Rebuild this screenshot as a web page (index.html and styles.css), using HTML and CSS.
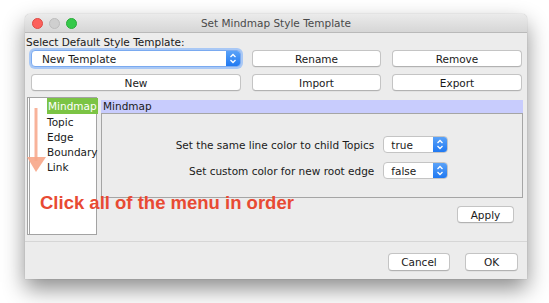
FILE: index.html
```html
<!DOCTYPE html>
<html>
<head>
<meta charset="utf-8">
<link rel="stylesheet" href="styles.css">
</head>
<body>
<div class="window">
  <div class="titlebar">
    <div class="lights">
      <span class="light red"></span>
      <span class="light gray"></span>
      <span class="light green"></span>
    </div>
    <div class="title">Set Mindmap Style Template</div>
  </div>
  <div class="content">
    <div class="label-top">Select Default Style Template:</div>
    <div class="btn-grid">
      <div class="combo combo-main focus">
        <span class="combo-text">New Template</span>
        <span class="combo-arrow"><svg width="8" height="11" viewBox="0 0 8 11"><path d="M1.5 4 L4 1.5 L6.5 4 M1.5 7 L4 9.5 L6.5 7" fill="none" stroke="#fff" stroke-width="1.3"/></svg></span>
      </div>
      <div class="btn">Rename</div>
      <div class="btn">Remove</div>
      <div class="btn">New</div>
      <div class="btn">Import</div>
      <div class="btn">Export</div>
    </div>
    <div class="main">
      <div class="list">
        <div class="item first"><span class="sel">Mindmap</span></div>
        <div class="item">Topic</div>
        <div class="item">Edge</div>
        <div class="item">Boundary</div>
        <div class="item">Link</div>
      </div>
      <div class="right">
        <div class="panel-head">Mindmap</div>
        <div class="panel">
          <div class="rows">
            <div class="row-label">Set the same line color to child Topics</div>
            <div class="combo combo-small">
              <span class="combo-text">true</span>
              <span class="combo-arrow"><svg width="8" height="11" viewBox="0 0 8 11"><path d="M1.5 4 L4 1.5 L6.5 4 M1.5 7 L4 9.5 L6.5 7" fill="none" stroke="#fff" stroke-width="1.3"/></svg></span>
            </div>
            <div class="row-label">Set custom color for new root edge</div>
            <div class="combo combo-small">
              <span class="combo-text">false</span>
              <span class="combo-arrow"><svg width="8" height="11" viewBox="0 0 8 11"><path d="M1.5 4 L4 1.5 L6.5 4 M1.5 7 L4 9.5 L6.5 7" fill="none" stroke="#fff" stroke-width="1.3"/></svg></span>
            </div>
          </div>
        </div>
        <div class="apply-row"><div class="btn btn-apply">Apply</div></div>
      </div>
    </div>
  </div>
  <div class="footer">
    <div class="btn btn-cancel">Cancel</div>
    <div class="btn btn-ok">OK</div>
  </div>
  <svg class="arrow" width="24" height="70" viewBox="0 0 24 70">
    <line x1="9" y1="3" x2="9" y2="56" stroke="#f7a688" stroke-width="3" stroke-opacity="0.85"/>
    <polygon points="0,52 19,52 9,67" fill="#f7a688" fill-opacity="0.9"/>
  </svg>
  <div class="note">Click all of the menu in order</div>
</div>
</body>
</html>
```

FILE: styles.css
```css
* { box-sizing: border-box; }
html, body { margin: 0; padding: 0; background: #ffffff; }
body {
  width: 549px;
  height: 303px;
  overflow: hidden;
  font-family: "DejaVu Sans", "Liberation Sans", sans-serif;
  font-size: 10.5px;
  color: #1a1a1a;
}
.window {
  position: relative;
  margin: 14px 0 0 25px;
  width: 502px;
  height: 265px;
  background: #ececec;
  border-radius: 5px 5px 0 0;
  box-shadow: 0 10px 22px rgba(0,0,0,0.45), 0 0 1px rgba(0,0,0,0.35);
  display: flex;
  flex-direction: column;
}
.titlebar {
  height: 19px;
  flex: none;
  display: flex;
  align-items: center;
  position: relative;
  background: linear-gradient(#ebebeb, #d6d6d6);
  border-bottom: 1px solid #b9b9b9;
  border-radius: 5px 5px 0 0;
}
.lights { display: flex; gap: 6px; padding-left: 7px; }
.light { width: 11px; height: 11px; border-radius: 50%; display: block; }
.light.red { background: #fc605b; border: 0.5px solid #de4a44; }
.light.gray { background: #cfcfcf; border: 0.5px solid #bdbdbd; }
.light.green { background: #35c94a; border: 0.5px solid #2aac3a; }
.title {
  position: absolute;
  left: 0; right: 0; top: 0;
  line-height: 19px;
  text-align: center;
  color: #4a4a4a;
  font-size: 10.5px;
}
.content { padding: 3px 0 0 1px; flex: 1; display: flex; flex-direction: column; }
.label-top { line-height: 13px; height: 13px; }
.btn-grid {
  display: grid;
  grid-template-columns: 210px 129px 130px;
  grid-auto-rows: 17px;
  column-gap: 11px;
  row-gap: 7px;
  padding-left: 5px;
  margin-top: 1px;
}
.btn {
  background: #ffffff;
  border: 1px solid #c4c4c4;
  border-bottom-color: #b2b2b2;
  border-radius: 4px;
  display: flex;
  align-items: center;
  justify-content: center;
  color: #1a1a1a;
  box-shadow: 0 0.5px 0.5px rgba(0,0,0,0.08);
}
.combo {
  background: #ffffff;
  border: 1px solid #c4c4c4;
  border-radius: 4px;
  display: flex;
  align-items: stretch;
  overflow: hidden;
}
.combo.focus {
  border-color: #7aaaf0;
  box-shadow: 0 0 0 2px #a9c8f5;
}
.combo-text { flex: 1; display: flex; align-items: center; padding-left: 7px; }
.combo-main .combo-text { padding-left: 10px; }
.combo-arrow {
  width: 14px;
  flex: none;
  background: linear-gradient(#5aa2f8, #2079f2);
  display: flex;
  align-items: center;
  justify-content: center;
}
.main {
  display: flex;
  margin-top: 6px;
  gap: 4px;
  padding-left: 1px;
}
.list {
  width: 70px;
  height: 138px;
  background: #ffffff;
  border: 1px solid #a3a3a3;
  border-left: 3px double #a3a3a3;
  padding: 0 0 0 17px;
  flex: none;
}
.item { height: 15px; line-height: 15px; white-space: nowrap; }
.item.first { height: 17px; }
.sel {
  display: inline-block;
  background: #7bc444;
  color: #ffffff;
  padding: 0 1px;
  height: 16px;
  line-height: 16px;
}
.right { flex: 1; margin-top: 3px; padding-right: 4px; display: flex; flex-direction: column; }
.panel-head {
  background: #c8ccfd;
  height: 13px;
  line-height: 13px;
  padding-left: 2px;
}
.panel {
  border: 1px solid #a5a5a5;
  height: 85px;
  display: flex;
  justify-content: center;
  padding-top: 22px;
}
.rows {
  display: grid;
  grid-template-columns: auto 65px;
  grid-auto-rows: 17px;
  column-gap: 9px;
  row-gap: 9px;
  align-items: center;
}
.row-label { text-align: right; white-space: nowrap; }
.combo-small { height: 17px; }
.apply-row { display: flex; justify-content: flex-end; padding-right: 9px; margin-top: 8px; }
.btn-apply { width: 57px; height: 17px; }
.footer {
  flex: none;
  height: 38px;
  border-top: 1px solid #d6d6d6;
  display: flex;
  justify-content: flex-end;
  align-items: flex-start;
  padding: 11px 9px 0 0;
  gap: 15px;
}
.btn-cancel { width: 62px; height: 18px; }
.btn-ok { width: 53px; height: 18px; }
.arrow { position: absolute; left: 2px; top: 91px; }
.note {
  position: absolute;
  left: 15px;
  top: 178px;
  font-family: "Liberation Sans", Arial, sans-serif;
  font-weight: bold;
  font-size: 18.5px;
  color: #e84a33;
  white-space: nowrap;
}
```
